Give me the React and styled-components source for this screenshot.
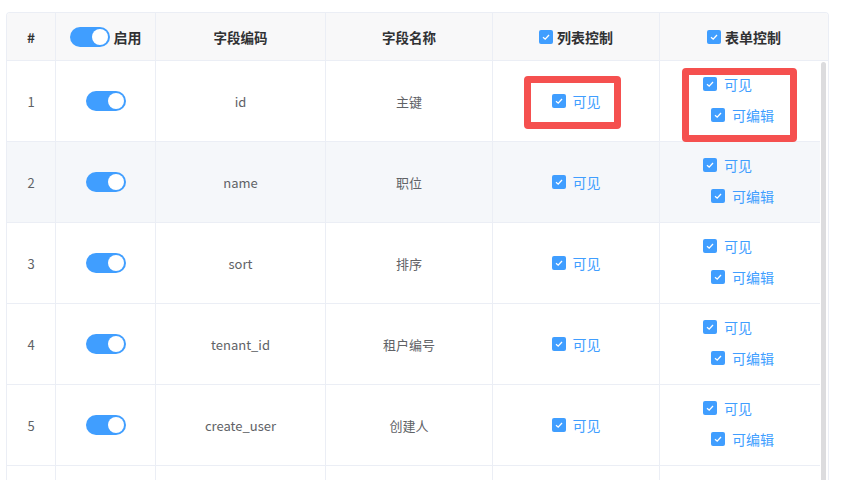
import React from "react";
import styled, { createGlobalStyle } from "styled-components";

const Global = createGlobalStyle`
  html, body { margin: 0; padding: 0; background: #fff; }
  body { font-family: "Noto Sans CJK SC", "Noto Sans", sans-serif; overflow: hidden; }
`;

const fields = [
  { code: "id", name: "主键", mark: true },
  { code: "name", name: "职位", hover: true },
  { code: "sort", name: "排序" },
  { code: "tenant_id", name: "租户编号" },
  { code: "create_user", name: "创建人" },
];

const cols = "49px 100px 170px 167px 167px 1fr";

export default function App() {
  return (
    <>
      <Global />
      <Page>
        <Table>
          <Head>
            <HeadCell>#</HeadCell>
            <HeadCell>
              <Switch />
              <HeadLabel>启用</HeadLabel>
            </HeadCell>
            <HeadCell>字段编码</HeadCell>
            <HeadCell>字段名称</HeadCell>
            <HeadCell>
              <Box />
              <HeadLabel>列表控制</HeadLabel>
            </HeadCell>
            <HeadCell $last>
              <Box />
              <HeadLabel>表单控制</HeadLabel>
            </HeadCell>
          </Head>
          <Body>
            <Rows>
              {fields.map((f, i) => (
                <Row key={f.code} $hover={f.hover}>
                  <Cell>{i + 1}</Cell>
                  <Cell>
                    <Switch />
                  </Cell>
                  <Cell>{f.code}</Cell>
                  <Cell>{f.name}</Cell>
                  <Cell>
                    <Check>
                      <Box />
                      <CheckLabel>可见</CheckLabel>
                    </Check>
                    {f.mark && <Mark $left={31} $top={15} $w={97} $h={53} />}
                  </Cell>
                  <Cell $last>
                    <Group>
                      <Check>
                        <Box />
                        <CheckLabel>可见</CheckLabel>
                      </Check>
                      <Check $indent>
                        <Box />
                        <CheckLabel>可编辑</CheckLabel>
                      </Check>
                    </Group>
                    {f.mark && <Mark $left={22} $top={7} $w={115} $h={74} />}
                  </Cell>
                </Row>
              ))}
              <Row>
                <Cell />
                <Cell />
                <Cell />
                <Cell />
                <Cell />
                <Cell $last />
              </Row>
            </Rows>
            <Gutter>
              <Thumb />
            </Gutter>
          </Body>
        </Table>
      </Page>
    </>
  );
}

function Switch() {
  return (
    <Track>
      <Knob />
    </Track>
  );
}

function Box() {
  return (
    <BoxWrap>
      <svg width="10" height="10" viewBox="0 0 10 10">
        <path d="M2 5.2 L4.2 7.2 L8 3" fill="none" stroke="#fff" strokeWidth="1.3" />
      </svg>
    </BoxWrap>
  );
}

const Page = styled.div`
  padding: 12px 16px 0 6px;
`;

const Table = styled.div`
  width: 821px;
  border: 1px solid #ebeef5;
  border-bottom: none;
  border-radius: 4px 4px 0 0;
  overflow: hidden;
`;

const Head = styled.div`
  display: grid;
  grid-template-columns: ${cols};
  height: 47px;
  background: #f8f8f9;
  border-bottom: 1px solid #ebeef5;
`;

const HeadCell = styled.div`
  display: flex;
  align-items: center;
  justify-content: center;
  gap: 4px;
  font-size: 13.5px;
  font-weight: 700;
  color: #303133;
  border-right: ${(p) => (p.$last ? "none" : "1px solid #ebeef5")};
`;

const HeadLabel = styled.span`
  font-size: 14px;
  font-weight: 700;
  color: #303133;
`;

const Body = styled.div`
  display: flex;
  height: 419px;
  overflow: hidden;
`;

const Rows = styled.div`
  flex: 1;
`;

const Gutter = styled.div`
  width: 8px;
  padding: 1px 2px 0 1px;
  box-sizing: border-box;
  background: #fff;
`;

const Thumb = styled.div`
  height: 560px;
  border-radius: 3px;
  background: #dcdcde;
`;

const Row = styled.div`
  display: grid;
  grid-template-columns: ${cols};
  height: 80px;
  border-bottom: 1px solid #ebeef5;
  background: ${(p) => (p.$hover ? "#f5f7fa" : "#fff")};
`;

const Cell = styled.div`
  position: relative;
  display: flex;
  align-items: center;
  justify-content: center;
  font-size: 13px;
  color: #606266;
  border-right: ${(p) => (p.$last ? "none" : "1px solid #ebeef5")};
`;

const Track = styled.span`
  display: inline-flex;
  justify-content: flex-end;
  align-items: center;
  box-sizing: border-box;
  width: 40px;
  height: 20px;
  padding: 2px;
  border-radius: 10px;
  background: #409eff;
`;

const Knob = styled.span`
  width: 16px;
  height: 16px;
  border-radius: 50%;
  background: #fff;
`;

const BoxWrap = styled.span`
  display: inline-flex;
  align-items: center;
  justify-content: center;
  width: 14px;
  height: 14px;
  border-radius: 2px;
  background: #409eff;
`;

const Group = styled.div`
  display: flex;
  flex-direction: column;
  align-items: flex-start;
  gap: 11px;
  margin: 0 0 3px -3px;
`;

const Check = styled.label`
  display: flex;
  align-items: center;
  gap: 7px;
  height: 20px;
  margin-left: ${(p) => (p.$indent ? "8px" : "0")};
`;

const CheckLabel = styled.span`
  font-size: 14px;
  color: #409eff;
`;

const Mark = styled.div`
  position: absolute;
  left: ${(p) => p.$left}px;
  top: ${(p) => p.$top}px;
  width: ${(p) => p.$w}px;
  height: ${(p) => p.$h}px;
  box-sizing: border-box;
  border: 7px solid #f5504f;
  border-radius: 4px;
  pointer-events: none;
`;
